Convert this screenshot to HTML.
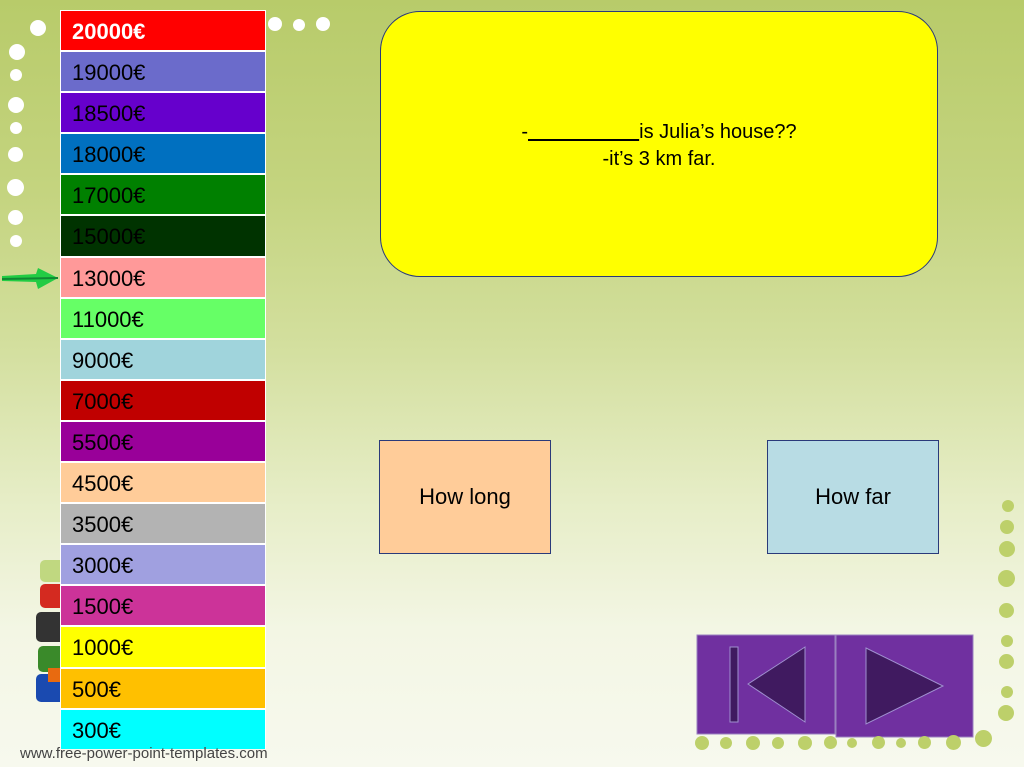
<!DOCTYPE html><html><head><style>
body{margin:0;width:1024px;height:767px;overflow:hidden;position:relative;font-family:"Liberation Sans",sans-serif;
background:linear-gradient(180deg,#b8cb6a 0%,#c4d47f 25%,#d3df9e 45%,#e6edc6 65%,#f3f6e4 82%,#f7f9ee 100%);}
.col{position:absolute;left:60px;top:10px;width:204px;background:#fff;padding:1px 1px 0 1px;}
.r{height:39.1px;margin-bottom:2px;font-size:22px;line-height:41px;padding-left:11px;color:#000;}
.d{position:absolute;border-radius:50%;background:#fff;}
.g{position:absolute;border-radius:50%;background:#bdd06a;}
.box{position:absolute;border:1px solid #2a3a7a;font-size:22px;text-align:center;}
</style></head><body>
<div class="d" style="left:30px;top:20px;width:16px;height:16px"></div>
<div class="d" style="left:9px;top:44px;width:16px;height:16px"></div>
<div class="d" style="left:10px;top:69px;width:12px;height:12px"></div>
<div class="d" style="left:8px;top:97px;width:16px;height:16px"></div>
<div class="d" style="left:10px;top:122px;width:12px;height:12px"></div>
<div class="d" style="left:8px;top:147px;width:15px;height:15px"></div>
<div class="d" style="left:7px;top:179px;width:17px;height:17px"></div>
<div class="d" style="left:8px;top:210px;width:15px;height:15px"></div>
<div class="d" style="left:10px;top:235px;width:12px;height:12px"></div>
<div class="d" style="left:268px;top:17px;width:14px;height:14px"></div>
<div class="d" style="left:293px;top:19px;width:12px;height:12px"></div>
<div class="d" style="left:316px;top:17px;width:14px;height:14px"></div>
<svg style="position:absolute;left:36px;top:560px" width="30" height="160"><rect x="4" y="0" width="26" height="22" rx="5" fill="#c0d880"/><rect x="4" y="24" width="26" height="24" rx="5" fill="#d42a20"/><rect x="0" y="52" width="30" height="30" rx="5" fill="#333"/><rect x="2" y="86" width="28" height="26" rx="5" fill="#3a8a2a"/><rect x="0" y="114" width="30" height="28" rx="5" fill="#1a4ab0"/><rect x="12" y="108" width="18" height="14" fill="#e86a10"/></svg>
<svg style="position:absolute;left:0;top:262px" width="62" height="30"><path d="M2 14 L36 12 L38 6 L58 16 L38 27 L36 20 L2 19Z" fill="#22cc44"/><path d="M2 17 L58 16" stroke="#118833" stroke-width="2"/></svg>
<div class="col">
<div class="r" style="background:#ff0000;color:#fff;font-weight:bold">20000€</div>
<div class="r" style="background:#6b6bcb">19000€</div>
<div class="r" style="background:#6600cc">18500€</div>
<div class="r" style="background:#0070c0">18000€</div>
<div class="r" style="background:#008000">17000€</div>
<div class="r" style="background:#003300">15000€</div>
<div class="r" style="background:#ff9999">13000€</div>
<div class="r" style="background:#66ff66">11000€</div>
<div class="r" style="background:#a0d4dc">9000€</div>
<div class="r" style="background:#c00000">7000€</div>
<div class="r" style="background:#990099">5500€</div>
<div class="r" style="background:#ffcc99">4500€</div>
<div class="r" style="background:#b3b3b3">3500€</div>
<div class="r" style="background:#a0a0e0">3000€</div>
<div class="r" style="background:#cc3399">1500€</div>
<div class="r" style="background:#ffff00">1000€</div>
<div class="r" style="background:#ffc000">500€</div>
<div class="r" style="background:#00ffff;margin-bottom:0">300€</div>
</div>
<div style="position:absolute;left:20px;top:745px;font-size:15px;color:#444">www.free-power-point-templates.com</div>
<div style="position:absolute;left:380px;top:11px;width:558px;height:266px;background:#ffff00;border:1px solid #2a3a7a;border-radius:40px;text-align:center;font-size:20px;line-height:27px;box-sizing:border-box;padding-top:107px">-<u>&nbsp;&nbsp;&nbsp;&nbsp;&nbsp;&nbsp;&nbsp;&nbsp;&nbsp;&nbsp;&nbsp;&nbsp;&nbsp;&nbsp;&nbsp;&nbsp;&nbsp;&nbsp;&nbsp;&nbsp;</u>is Julia’s house??<br>-it’s 3 km far.</div>
<div class="box" style="left:379px;top:440px;width:170px;height:112px;background:#ffcc99;line-height:112px">How long</div>
<div class="box" style="left:767px;top:440px;width:170px;height:112px;background:#b8dce4;line-height:112px">How far</div>
<svg style="position:absolute;left:696px;top:633px" width="280" height="105"><rect x="1" y="2" width="138" height="99" fill="#7030a0" stroke="#9a80c0"/><rect x="140" y="2" width="137" height="102" fill="#7030a0" stroke="#9a80c0"/><rect x="34" y="14" width="8" height="75" fill="#401a60" stroke="#a090d0"/><path d="M52 51 L109 14 L109 89Z" fill="#401a60" stroke="#a090d0"/><path d="M170 15 L247 53 L170 91Z" fill="#401a60" stroke="#a090d0"/></svg>
<div class="g" style="left:1002px;top:500px;width:12px;height:12px"></div>
<div class="g" style="left:1000px;top:520px;width:14px;height:14px"></div>
<div class="g" style="left:999px;top:541px;width:16px;height:16px"></div>
<div class="g" style="left:998px;top:570px;width:17px;height:17px"></div>
<div class="g" style="left:999px;top:603px;width:15px;height:15px"></div>
<div class="g" style="left:1001px;top:635px;width:12px;height:12px"></div>
<div class="g" style="left:999px;top:654px;width:15px;height:15px"></div>
<div class="g" style="left:1001px;top:686px;width:12px;height:12px"></div>
<div class="g" style="left:998px;top:705px;width:16px;height:16px"></div>
<div class="g" style="left:975px;top:730px;width:17px;height:17px"></div>
<div class="g" style="left:695px;top:736px;width:14px;height:14px"></div>
<div class="g" style="left:720px;top:737px;width:12px;height:12px"></div>
<div class="g" style="left:746px;top:736px;width:14px;height:14px"></div>
<div class="g" style="left:772px;top:737px;width:12px;height:12px"></div>
<div class="g" style="left:798px;top:736px;width:14px;height:14px"></div>
<div class="g" style="left:824px;top:736px;width:13px;height:13px"></div>
<div class="g" style="left:847px;top:738px;width:10px;height:10px"></div>
<div class="g" style="left:872px;top:736px;width:13px;height:13px"></div>
<div class="g" style="left:896px;top:738px;width:10px;height:10px"></div>
<div class="g" style="left:918px;top:736px;width:13px;height:13px"></div>
<div class="g" style="left:946px;top:735px;width:15px;height:15px"></div>
</body></html>
